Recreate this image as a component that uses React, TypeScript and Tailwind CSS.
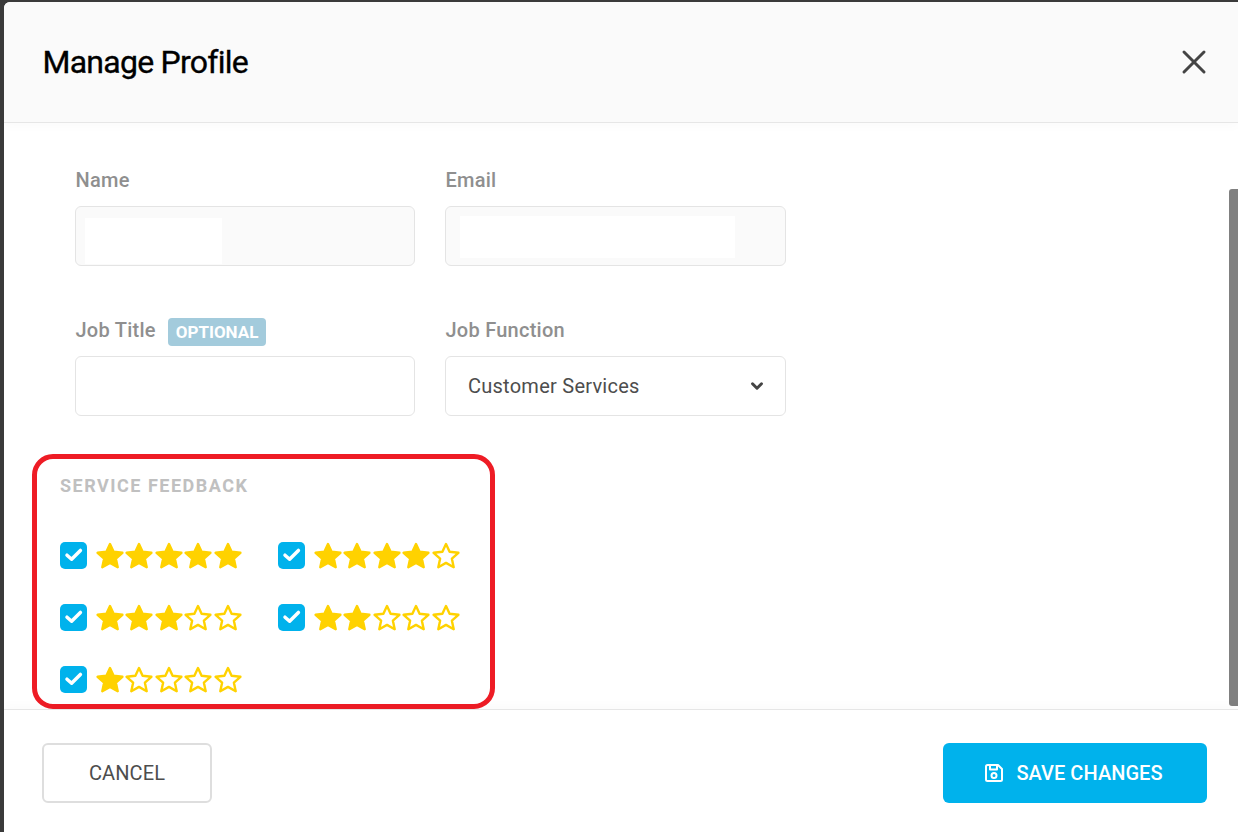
import { X, ChevronDown } from "lucide-react";

const STAR_POINTS =
  "14,2 17.6,9.8 26.4,10.8 19.9,16.7 21.7,25.2 14,20.9 6.3,25.2 8.1,16.7 1.6,10.8 10.4,9.8";

function Star({ filled }: { filled: boolean }) {
  return (
    <svg width="28" height="27" viewBox="0 0 28 27" className="mr-[1.4px] shrink-0">
      <polygon
        points={STAR_POINTS}
        fill={filled ? "#ffd200" : "#ffffff"}
        stroke="#ffd200"
        strokeWidth="2.4"
        strokeLinejoin="round"
      />
    </svg>
  );
}

function Rating({ value }: { value: number }) {
  return (
    <label className="flex items-center">
      <span className="flex w-[27px] h-[27px] rounded-[5px] bg-[#00b2ec] shrink-0">
        <svg width="27" height="27" viewBox="0 0 27 27" fill="none" stroke="white" strokeWidth="3.5" strokeLinecap="round" strokeLinejoin="round">
          <path d="M7 13.2l4.6 4L20.4 8.4" />
        </svg>
      </span>
      <span className="flex ml-[9px] mt-[1px]">
        {[1, 2, 3, 4, 5].map((n) => (
          <Star key={n} filled={n <= value} />
        ))}
      </span>
    </label>
  );
}

function FieldLabel({ children }: { children: React.ReactNode }) {
  return (
    <div className="flex items-center h-[26px] mb-[13px] pl-[0.5px] text-[20px] leading-[26px] font-medium tracking-[0.25px] text-[#8f8f8f]">
      {children}
    </div>
  );
}

export default function App() {
  return (
    <div
      className="h-[832px] w-[1238px] overflow-hidden bg-[#3a3a3a] pt-[2px] pl-[4px]"
      style={{ fontFamily: "Roboto, sans-serif" }}
    >
      <div className="flex flex-col h-full bg-white rounded-tl-[6px] overflow-hidden">
        {/* HEADER */}
        <div className="relative z-10 flex items-center justify-between h-[121px] shrink-0 pl-[38.5px] pr-[24px] bg-[#fafafa] border-b border-[#e6e6e6] shadow-[0_4px_10px_rgba(0,0,0,0.02)]">
          <h2 className="text-[32px] leading-[40px] font-normal tracking-[-0.75px] text-black [-webkit-text-stroke:0.35px_#000]">
            Manage Profile
          </h2>
          <X size={40} strokeWidth={1.8} className="text-[#444444]" />
        </div>

        {/* BODY */}
        <div className="flex flex-1 min-h-0">
          <div className="flex-1 min-w-0">
            <div className="grid grid-cols-[340px_341px] gap-x-[30px] gap-y-[51px] pl-[71px] pt-[44px]">
              <div>
                <FieldLabel>Name</FieldLabel>
                <div className="h-[60px] rounded-[6px] border border-[#e4e4e4] bg-[#fafafa] pl-[9px] pt-[11px]">
                  <div className="w-[137px] h-[46px] bg-white" />
                </div>
              </div>
              <div>
                <FieldLabel>Email</FieldLabel>
                <div className="h-[60px] rounded-[6px] border border-[#e4e4e4] bg-[#fafafa] pl-[14px] pt-[9px]">
                  <div className="w-[275px] h-[42px] bg-white" />
                </div>
              </div>
              <div>
                <FieldLabel>
                  Job Title
                  <span className="ml-[12px] mt-[4px] px-[8px] h-[28px] rounded-[4px] bg-[#a3cbdc] text-white text-[17px] leading-[28px] font-bold tracking-normal">
                    OPTIONAL
                  </span>
                </FieldLabel>
                <div className="h-[60px] rounded-[6px] border border-[#e4e4e4] bg-white" />
              </div>
              <div>
                <FieldLabel>Job Function</FieldLabel>
                <div className="flex items-center justify-between h-[60px] rounded-[6px] border border-[#e4e4e4] bg-white pl-[22px] pr-[19px] text-[20px] tracking-[0.25px] text-[#4d4d4d]">
                  Customer Services
                  <ChevronDown size={18} strokeWidth={4} className="text-[#444444]" />
                </div>
              </div>
            </div>

            {/* SERVICE FEEDBACK */}
            <div className="ml-[28px] mt-[38px] w-[463px] h-[255px] rounded-[21px] border-[5px] border-[#ee1c25] pl-[23px] pt-[15px]">
              <div className="text-[18px] leading-[24px] font-bold tracking-[1.5px] text-[#c0c0c0]">
                SERVICE FEEDBACK
              </div>
              <div className="grid grid-cols-[218px_auto] mt-[43px] gap-y-[34px]">
                <Rating value={5} />
                <Rating value={4} />
                <Rating value={3} />
                <Rating value={2} />
                <Rating value={1} />
              </div>
            </div>
          </div>

          {/* SCROLLBAR */}
          <div className="w-[9px] shrink-0 pt-[66px] pb-[3px]">
            <div className="h-full bg-[#808080] rounded-tl-[3px] rounded-bl-[3px]" />
          </div>
        </div>

        {/* FOOTER */}
        <div className="flex items-center justify-between h-[123px] shrink-0 pl-[38px] pr-[31px] pt-[4px] bg-white border-t border-[#e6e6e6] shadow-[0_-4px_10px_rgba(0,0,0,0.02)]">
          <button className="w-[170px] h-[60px] rounded-[6px] border-2 border-[#dedede] bg-white text-[20px] tracking-[0.1px] text-[#4d4d4d]">
            CANCEL
          </button>
          <button className="flex items-center justify-center gap-[12px] w-[264px] h-[60px] pr-[3px] rounded-[6px] bg-[#00b2ec] text-white text-[20px] font-medium tracking-[0.05px]">
            <svg width="20" height="20" viewBox="0 0 20 20" fill="none" stroke="white" strokeWidth="2" strokeLinejoin="round">
              <path d="M2 3.5A1.5 1.5 0 0 1 3.5 2H14l4 4v10.5a1.5 1.5 0 0 1-1.5 1.5h-13A1.5 1.5 0 0 1 2 16.5z" />
              <path d="M6 2v4.5h7V2" />
              <circle cx="10" cy="12.5" r="2.5" />
            </svg>
            SAVE CHANGES
          </button>
        </div>
      </div>
    </div>
  );
}
